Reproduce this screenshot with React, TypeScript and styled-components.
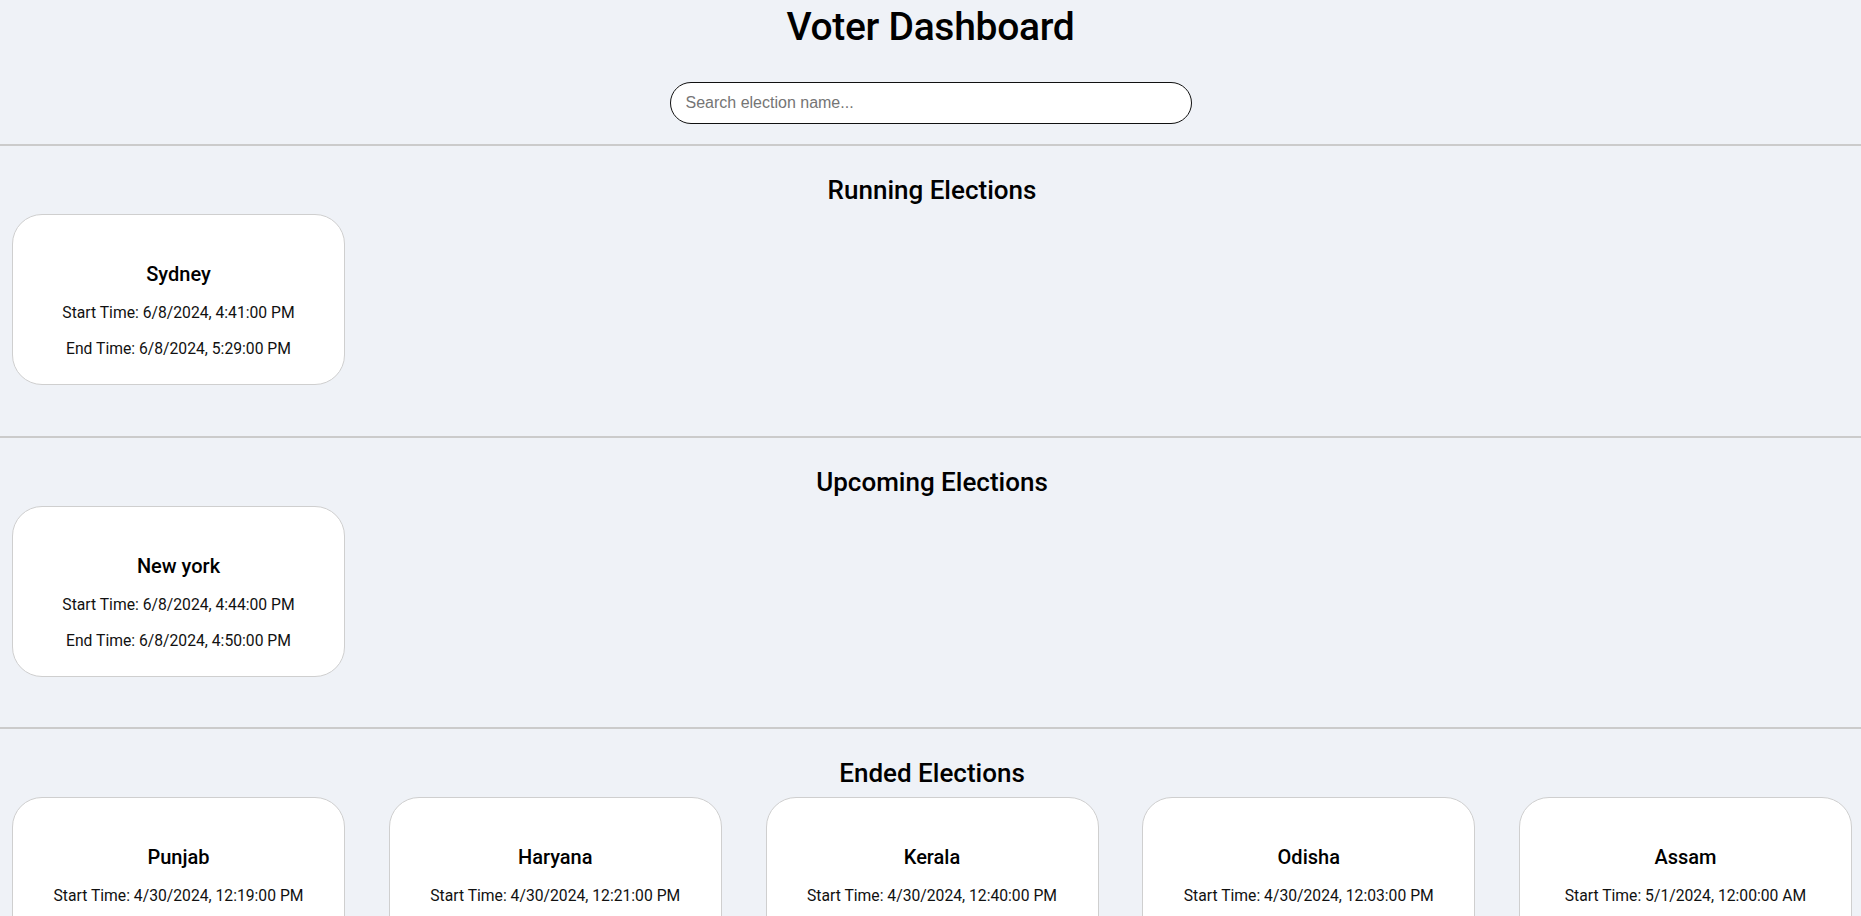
import styled, { createGlobalStyle } from 'styled-components';

const GlobalStyle = createGlobalStyle`
  html {
    scrollbar-width: none;
  }
  html::-webkit-scrollbar {
    display: none;
  }
  body {
    margin: 0;
    background: #eff2f7;
    font-family: Roboto, "Liberation Sans", sans-serif;
    color: #000;
  }
`;

type Election = {
  name: string;
  start: string;
  end: string;
};

const running: Election[] = [
  { name: 'Sydney', start: '6/8/2024, 4:41:00 PM', end: '6/8/2024, 5:29:00 PM' },
];

const upcoming: Election[] = [
  { name: 'New york', start: '6/8/2024, 4:44:00 PM', end: '6/8/2024, 4:50:00 PM' },
];

const ended: Election[] = [
  { name: 'Punjab', start: '4/30/2024, 12:19:00 PM', end: '4/30/2024, 12:30:00 PM' },
  { name: 'Haryana', start: '4/30/2024, 12:21:00 PM', end: '4/30/2024, 12:35:00 PM' },
  { name: 'Kerala', start: '4/30/2024, 12:40:00 PM', end: '4/30/2024, 12:55:00 PM' },
  { name: 'Odisha', start: '4/30/2024, 12:03:00 PM', end: '4/30/2024, 12:15:00 PM' },
  { name: 'Assam', start: '5/1/2024, 12:00:00 AM', end: '5/1/2024, 12:30:00 AM' },
];

const Page = styled.div`
  display: flex;
  flex-direction: column;
`;

const Header = styled.header`
  display: flex;
  flex-direction: column;
  align-items: center;
  padding: 3px 0 20px;
`;

const Title = styled.h1`
  margin: 0;
  font-size: 39px;
  line-height: 48px;
  font-weight: 500;
  letter-spacing: -0.3px;
`;

const SearchInput = styled.input`
  margin-top: 31px;
  width: 522px;
  height: 42px;
  box-sizing: border-box;
  border: 1px solid #111;
  border-radius: 21px;
  padding: 0 15px;
  background: #fff;
  font-family: Arial, "Liberation Sans", sans-serif;
  font-size: 16px;
  color: #333;
  outline: none;

  &::placeholder {
    color: #757575;
  }
`;

const Section = styled.section`
  border-top: 2px solid #cbcbcb;
  padding: 28px 9px 50.5px 12px;
`;

const SectionTitle = styled.h2`
  margin: 0 0 8px;
  text-align: center;
  font-size: 26px;
  line-height: 32px;
  font-weight: 500;
`;

const CardRow = styled.div`
  display: flex;
  justify-content: space-between;
`;

const Card = styled.div`
  width: 333px;
  height: 171px;
  box-sizing: border-box;
  background: #fff;
  border: 1px solid #cfcfcf;
  border-radius: 30px;
  padding: 24px 8px 12px;
  text-align: center;
`;

const CardTitle = styled.h3`
  margin: 23px 0 16px;
  font-size: 20px;
  line-height: 24px;
  font-weight: 500;
`;

const CardText = styled.p`
  margin: 15px 0;
  font-size: 15.7px;
  line-height: 21px;
  color: #111;
`;

function ElectionSection({ title, items }: { title: string; items: Election[] }) {
  return (
    <Section>
      <SectionTitle>{title}</SectionTitle>
      <CardRow>
        {items.map((e) => (
          <Card key={e.name}>
            <CardTitle>{e.name}</CardTitle>
            <CardText>Start Time: {e.start}</CardText>
            <CardText>End Time: {e.end}</CardText>
          </Card>
        ))}
      </CardRow>
    </Section>
  );
}

function App() {
  return (
    <Page>
      <GlobalStyle />
      <Header>
        <Title>Voter Dashboard</Title>
        <SearchInput type="text" placeholder="Search election name..." />
      </Header>
      <ElectionSection title="Running Elections" items={running} />
      <ElectionSection title="Upcoming Elections" items={upcoming} />
      <ElectionSection title="Ended Elections" items={ended} />
    </Page>
  );
}

export default App;
